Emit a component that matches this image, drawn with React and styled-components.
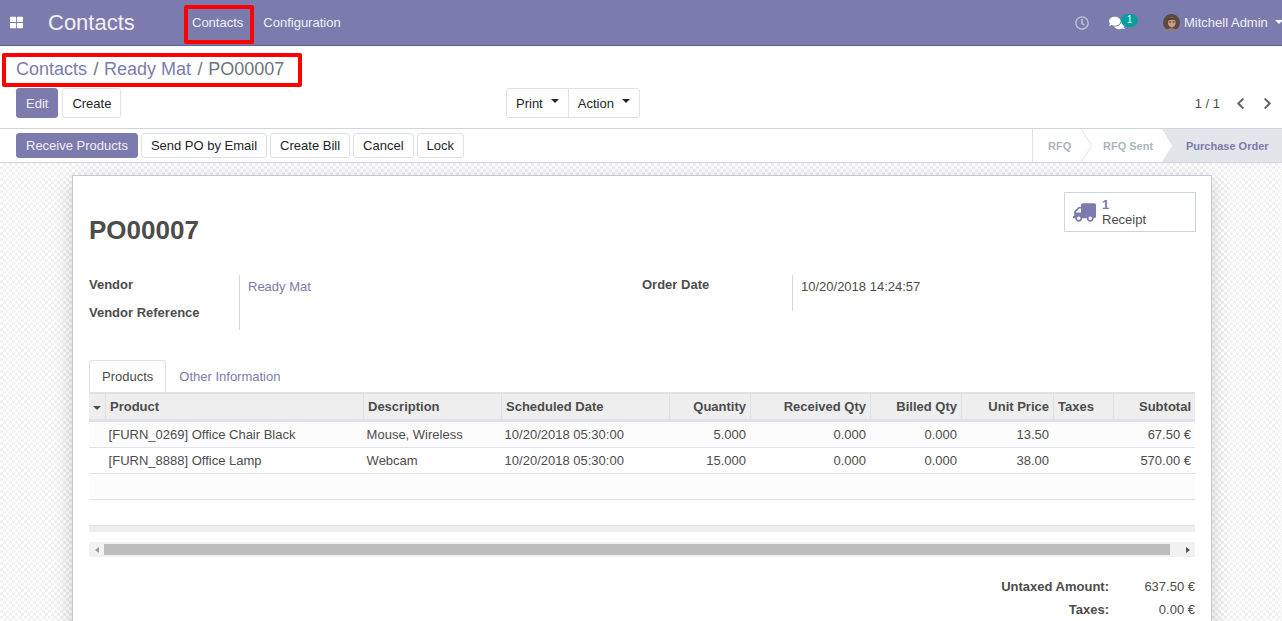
import React from 'react';
import styled, { createGlobalStyle } from 'styled-components';
import { FaThLarge, FaRegClock, FaComments, FaChevronLeft, FaChevronRight, FaTruck } from 'react-icons/fa';

const purple = '#7c7bad';

const columns = [
  { key: 'handle', width: 17 },
  { key: 'product', label: 'Product', width: 258 },
  { key: 'description', label: 'Description', width: 138 },
  { key: 'date', label: 'Scheduled Date', width: 168 },
  { key: 'qty', label: 'Quantity', width: 81, right: true },
  { key: 'received', label: 'Received Qty', width: 120, right: true },
  { key: 'billed', label: 'Billed Qty', width: 91, right: true },
  { key: 'price', label: 'Unit Price', width: 92, right: true },
  { key: 'taxes', label: 'Taxes', width: 60 },
  { key: 'subtotal', label: 'Subtotal', width: 81, right: true },
];

const rows = [
  {
    product: '[FURN_0269] Office Chair Black',
    description: 'Mouse, Wireless',
    date: '10/20/2018 05:30:00',
    qty: '5.000',
    received: '0.000',
    billed: '0.000',
    price: '13.50',
    subtotal: '67.50 €',
  },
  {
    product: '[FURN_8888] Office Lamp',
    description: 'Webcam',
    date: '10/20/2018 05:30:00',
    qty: '15.000',
    received: '0.000',
    billed: '0.000',
    price: '38.00',
    subtotal: '570.00 €',
  },
  {},
  {},
];

const Avatar = () => (
  <AvatarSvg viewBox='0 0 16 16'>
    <circle cx='8' cy='8' r='8' fill='#5d4a3f' />
    <ellipse cx='8.3' cy='8' rx='3.6' ry='4.6' fill='#c99f84' />
    <path d='M4 6.5C4.5 3 11.5 2.5 12.5 6.5L11 5.5H6Z' fill='#3c2c25' />
    <path d='M5.5 7.5h2.2M9 7.5h2.2' stroke='#3f322c' strokeWidth='0.9' />
    <path d='M2.5 16C3.5 12.5 12.5 12.5 13.5 16Z' fill='#8d8078' />
  </AvatarSvg>
);

const App = () => (
  <Page>
    <GlobalStyle />
    <Navbar>
      <AppsButton>
        <FaThLarge size={13} />
      </AppsButton>
      <Brand>Contacts</Brand>
      <NavMenu>
        <NavItem>
          Contacts
          <NavHighlight />
        </NavItem>
        <NavItem>Configuration</NavItem>
      </NavMenu>
      <NavRight>
        <ClockIcon>
          <FaRegClock size={14} />
        </ClockIcon>
        <Messages>
          <FaComments size={16} />
          <Badge>1</Badge>
        </Messages>
        <UserMenu>
          <Avatar />
          Mitchell Admin
          <Caret $light />
        </UserMenu>
      </NavRight>
    </Navbar>

    <ControlPanel>
      <Breadcrumb>
        <CrumbLink>Contacts</CrumbLink>
        <CrumbSep>/</CrumbSep>
        <CrumbLink>Ready Mat</CrumbLink>
        <CrumbSep>/</CrumbSep>
        <CrumbCurrent>PO00007</CrumbCurrent>
        <BreadcrumbHighlight />
      </Breadcrumb>
      <PanelRow>
        <PanelLeft>
          <Button $primary $tall>Edit</Button>
          <Button $tall>Create</Button>
        </PanelLeft>
        <ActionGroup>
          <GroupButton>
            Print
            <Caret />
          </GroupButton>
          <GroupButton>
            Action
            <Caret />
          </GroupButton>
        </ActionGroup>
        <Pager>
          <PagerValue>1 / 1</PagerValue>
          <PagerArrows>
            <FaChevronLeft size={13} />
            <FaChevronRight size={13} />
          </PagerArrows>
        </Pager>
      </PanelRow>
    </ControlPanel>

    <StatusHeader>
      <HeaderButtons>
        <Button $primary>Receive Products</Button>
        <Button>Send PO by Email</Button>
        <Button>Create Bill</Button>
        <Button>Cancel</Button>
        <Button>Lock</Button>
      </HeaderButtons>
      <StatusBar>
        <StatusStep $width={59}>
          RFQ
          <StepChevron viewBox='0 0 11 33' preserveAspectRatio='none'>
            <path d='M0 0L11 16.5L0 33' />
          </StepChevron>
        </StatusStep>
        <StatusStep $width={70} $pad={11}>RFQ Sent</StatusStep>
        <ActiveStep>Purchase Order</ActiveStep>
      </StatusBar>
    </StatusHeader>

    <FormView>
      <Sheet>
        <ButtonBox>
          <StatButton>
            <TruckIcon size={23} />
            <StatText>
              <StatValue>1</StatValue>
              Receipt
            </StatText>
          </StatButton>
        </ButtonBox>
        <Title>PO00007</Title>
        <FormGrid>
          <FormGroup>
            <Labels>
              <Label>Vendor</Label>
              <Label>Vendor Reference</Label>
            </Labels>
            <Values $tall>
              <VendorLink>Ready Mat</VendorLink>
            </Values>
          </FormGroup>
          <FormGroup>
            <Labels>
              <Label>Order Date</Label>
            </Labels>
            <Values>10/20/2018 14:24:57</Values>
          </FormGroup>
        </FormGrid>

        <Tabs>
          <Tab $active>Products</Tab>
          <Tab>Other Information</Tab>
        </Tabs>

        <Table>
          <colgroup>
            {columns.map((col) => (
              <col key={col.key} width={col.width} />
            ))}
          </colgroup>
          <thead>
            <tr>
              {columns.map((col) => (
                <HeadCell key={col.key} $right={col.right}>
                  {col.key === 'handle' ? <Caret $table /> : col.label}
                </HeadCell>
              ))}
            </tr>
          </thead>
          <tbody>
            {rows.map((row, i) => (
              <BodyRow key={i} $striped={i % 2 === 0}>
                {columns.map((col) => (
                  <BodyCell key={col.key} $right={col.right}>
                    {row[col.key]}
                  </BodyCell>
                ))}
              </BodyRow>
            ))}
          </tbody>
        </Table>
        <TableFooter />

        <ScrollBar>
          <ScrollArrow $left />
          <ScrollThumb />
          <ScrollArrow />
        </ScrollBar>

        <Totals>
          <TotalLabel>Untaxed Amount:</TotalLabel>
          <TotalValue>637.50 €</TotalValue>
          <TotalLabel>Taxes:</TotalLabel>
          <TotalValue>0.00 €</TotalValue>
        </Totals>
      </Sheet>
    </FormView>
  </Page>
);

export default App;

const GlobalStyle = createGlobalStyle`
  html, body {
    margin: 0;
    height: 100%;
    overflow: hidden;
    background: #fff;
  }
  body {
    font-family: "Liberation Sans", Arial, sans-serif;
    font-size: 13px;
    color: #4c4c4c;
  }
`;

const Page = styled.div`
  height: 621px;
  display: flex;
  flex-direction: column;
  overflow: hidden;
`;

const Navbar = styled.header`
  flex: 0 0 46px;
  box-sizing: border-box;
  display: flex;
  align-items: center;
  background: ${purple};
  border-bottom: 1px solid #5f5e97;
  color: #fff;
`;

const AppsButton = styled.div`
  width: 48px;
  padding-left: 10px;
  box-sizing: border-box;
  display: flex;
  align-items: center;
`;

const Brand = styled.div`
  width: 134px;
  font-size: 22px;
  line-height: 1;
  color: #f0f0f6;
`;

const NavMenu = styled.nav`
  display: flex;
  align-items: center;
`;

const NavItem = styled.div`
  position: relative;
  padding: 0 10px;
  color: #f0f0f6;
  line-height: 18px;
`;

const NavHighlight = styled.span`
  position: absolute;
  left: 2px;
  top: -9px;
  width: 70px;
  height: 39px;
  box-sizing: border-box;
  border: 4px solid #f00;
  border-radius: 2px;
`;

const NavRight = styled.div`
  margin-left: auto;
  display: flex;
  align-items: center;
  height: 100%;
`;

const ClockIcon = styled.div`
  display: flex;
  color: #c5c5d9;
  margin-right: 20px;
`;

const Messages = styled.div`
  position: relative;
  display: flex;
  width: 16px;
  margin-right: 38px;
  color: #fff;
`;

const Badge = styled.span`
  position: absolute;
  left: 12px;
  top: -1px;
  width: 17px;
  height: 13px;
  border-radius: 7px;
  background: #00a09d;
  color: #fff;
  font-size: 10px;
  line-height: 12px;
  text-align: center;
`;

const UserMenu = styled.div`
  display: flex;
  align-items: center;
  width: 119px;
  white-space: nowrap;
  color: #f0f0f6;
`;

const AvatarSvg = styled.svg`
  width: 17px;
  height: 17px;
  margin-right: 4px;
  flex: none;
`;

const Caret = styled.span`
  display: inline-block;
  flex: none;
  margin-left: ${(p) => (p.$table ? 0 : p.$light ? '7px' : '8px')};
  border-top: 4px solid ${(p) => (p.$light ? '#fff' : p.$table ? '#4c4c4c' : '#212529')};
  border-left: 4px solid transparent;
  border-right: 4px solid transparent;
  vertical-align: ${(p) => (p.$table ? '1px' : '3px')};
  position: relative;
  top: ${(p) => (p.$light ? '-1px' : '0')};
`;

const ControlPanel = styled.section`
  flex: 0 0 83px;
  box-sizing: border-box;
  padding: 0 8px 0 16px;
  border-bottom: 1px solid #ced4da;
  background: #fff;
`;

const Breadcrumb = styled.div`
  position: relative;
  display: flex;
  align-items: center;
  height: 42px;
  padding-top: 5px;
  box-sizing: border-box;
  font-size: 18px;
`;

const BreadcrumbHighlight = styled.span`
  position: absolute;
  left: -14px;
  top: 7px;
  width: 300px;
  height: 34px;
  box-sizing: border-box;
  border: 4px solid #f00;
  border-radius: 2px;
`;

const CrumbLink = styled.span`
  color: ${purple};
`;

const CrumbSep = styled.span`
  color: #6c757d;
  margin: 0 5.5px 0 6.5px;
`;

const CrumbCurrent = styled.span`
  color: #6c757d;
`;

const PanelRow = styled.div`
  display: flex;
  align-items: flex-start;
`;

const PanelLeft = styled.div`
  flex: 0 0 490px;
  display: flex;
  gap: 4px;
`;

const Button = styled.button`
  height: ${(p) => (p.$tall ? '30px' : '25px')};
  box-sizing: border-box;
  padding: 0 9px;
  white-space: nowrap;
  border: 1px solid ${(p) => (p.$primary ? purple : '#dee2e6')};
  border-radius: 3px;
  background: ${(p) => (p.$primary ? purple : '#fff')};
  color: ${(p) => (p.$primary ? '#f0f0f6' : '#212529')};
  font: 13px "Liberation Sans", Arial, sans-serif;
`;

const ActionGroup = styled.div`
  display: flex;
  width: 134px;
  height: 30px;
  box-sizing: border-box;
  border: 1px solid #dee2e6;
  border-radius: 3px;
`;

const GroupButton = styled.div`
  display: flex;
  align-items: center;
  padding: 0 9px;
  color: #212529;
  & + & {
    flex: 1;
    border-left: 1px solid #dee2e6;
  }
  ${Caret} {
    top: -2px;
  }
`;

const Pager = styled.div`
  margin-left: auto;
  display: flex;
  align-items: center;
  height: 30px;
`;

const PagerValue = styled.span`
  color: #4c4c4c;
  margin-right: 14px;
`;

const PagerArrows = styled.div`
  display: flex;
  gap: 14px;
  color: #666;
`;

const StatusHeader = styled.section`
  flex: 0 0 34px;
  box-sizing: border-box;
  display: flex;
  align-items: center;
  justify-content: space-between;
  padding-left: 16px;
  border-bottom: 1px solid #ced4da;
  background: #fff;
`;

const HeaderButtons = styled.div`
  display: flex;
  gap: 3px;
`;

const StatusBar = styled.div`
  flex: none;
  height: 33px;
  display: flex;
  border-left: 1px solid #dee2e6;
  font-size: 11px;
  font-weight: 700;
  white-space: nowrap;
`;

const StatusStep = styled.div`
  position: relative;
  box-sizing: border-box;
  width: ${(p) => p.$width}px;
  padding: 1px 0 0 ${(p) => p.$pad || 15}px;
  line-height: 32px;
  color: #adb5bd;
`;

const StepChevron = styled.svg`
  position: absolute;
  right: 0;
  top: 0;
  width: 11px;
  height: 33px;
  fill: none;
  stroke: #dee2e6;
`;

const ActiveStep = styled.div`
  flex: 0 0 120px;
  box-sizing: border-box;
  padding: 1px 0 0 24px;
  line-height: 32px;
  background: #e2e5e9;
  color: ${purple};
  clip-path: polygon(0 0, 100% 0, 100% 100%, 0 100%, 10px 50%);
`;

const FormView = styled.main`
  flex: 1;
  min-height: 0;
  padding-top: 13px;
  background-color: #fff;
  background-image: repeating-conic-gradient(#f1f1f1 0 25%, #fff 0 50%);
  background-size: 6px 6px;
`;

const Sheet = styled.div`
  position: relative;
  box-sizing: border-box;
  width: 1140px;
  min-height: 700px;
  margin-left: 72px;
  margin-top: -1px;
  padding: 16px 16px 0;
  background: #fff;
  border: 1px solid #c8c8d3;
  box-shadow: 0 5px 20px -1px rgba(0, 0, 0, 0.2);
`;

const ButtonBox = styled.div`
  display: flex;
  justify-content: flex-end;
  margin-right: -1px;
  height: 0;
`;

const StatButton = styled.div`
  display: flex;
  flex: none;
  align-items: center;
  gap: 6px;
  width: 132px;
  height: 40px;
  box-sizing: border-box;
  padding-left: 8px;
  border: 1px solid #ced4da;
  color: #4c4c4c;
`;

const TruckIcon = styled(FaTruck)`
  color: ${purple};
  transform: scaleX(-1);
`;

const StatText = styled.div`
  line-height: 15px;
`;

const StatValue = styled.div`
  color: ${purple};
  font-weight: 700;
`;

const Title = styled.h1`
  margin: 18px 0 0;
  font-size: 26px;
  line-height: 40px;
  font-weight: 700;
  color: #4c4c4c;
`;

const FormGrid = styled.div`
  display: grid;
  grid-template-columns: 553px 553px;
  margin-top: 25px;
  align-items: start;
`;

const FormGroup = styled.div`
  display: flex;
`;

const Labels = styled.div`
  flex: 0 0 150px;
  padding-top: 1px;
`;

const Label = styled.div`
  height: 28px;
  line-height: 17px;
  font-weight: 700;
`;

const Values = styled.div`
  flex: 1;
  box-sizing: border-box;
  height: ${(p) => (p.$tall ? '55px' : '36px')};
  padding: 4px 0 0 8px;
  border-left: 1px solid #d8d8d8;
  line-height: 15px;
`;

const VendorLink = styled.span`
  color: ${purple};
`;

const Tabs = styled.div`
  display: flex;
  height: 32px;
  margin-top: 28px;
  box-sizing: border-box;
`;

const Tab = styled.div`
  box-sizing: border-box;
  height: 32px;
  padding: 8px 12px 0;
  line-height: 16px;
  border: 1px solid ${(p) => (p.$active ? '#dee2e6' : 'transparent')};
  border-bottom: 0;
  border-radius: 3px 3px 0 0;
  color: ${(p) => (p.$active ? '#4c4c4c' : purple)};
`;

const Table = styled.table`
  width: 1106px;
  table-layout: fixed;
  border-collapse: separate;
  border-spacing: 0;
`;

const HeadCell = styled.th`
  box-sizing: border-box;
  height: 30px;
  padding: 0 4px;
  overflow: hidden;
  white-space: nowrap;
  background: #eee;
  border-top: 2px solid #dee2e6;
  border-bottom: 3px solid #dee2e6;
  border-right: 1px solid #dee2e6;
  text-align: ${(p) => (p.$right ? 'right' : 'left')};
  font-weight: 700;
  line-height: 14px;
  &:last-child {
    border-right: 0;
  }
`;

const BodyRow = styled.tr`
  background: ${(p) => (p.$striped ? '#fcfcfc' : '#fff')};
`;

const BodyCell = styled.td`
  box-sizing: border-box;
  height: 26px;
  padding: 0 5px 0 2.6px;
  overflow: hidden;
  white-space: nowrap;
  border-bottom: 1px solid #dee2e6;
  text-align: ${(p) => (p.$right ? 'right' : 'left')};
  line-height: 15px;
  &:last-child {
    padding-right: 4px;
  }
`;

const TableFooter = styled.div`
  height: 6px;
  background: #eee;
`;

const ScrollBar = styled.div`
  display: flex;
  align-items: center;
  height: 15px;
  margin-top: 10px;
  background: #f1f1f1;
`;

const ScrollThumb = styled.div`
  flex: 1;
  height: 11px;
  background: #bdbdbd;
`;

const ScrollArrow = styled.span`
  flex: 0 0 ${(p) => (p.$left ? '15px' : '25px')};
  box-sizing: border-box;
  display: flex;
  justify-content: ${(p) => (p.$left ? 'center' : 'flex-end')};
  padding-right: ${(p) => (p.$left ? 0 : '5px')};
  &::before {
    content: '';
    border-top: 3.5px solid transparent;
    border-bottom: 3.5px solid transparent;
    ${(p) => (p.$left ? 'border-right: 4px solid #999;' : 'border-left: 4px solid #505050;')}
  }
`;

const Totals = styled.div`
  display: grid;
  grid-template-columns: 1fr 86px;
  margin-top: 18px;
  line-height: 23px;
  text-align: right;
`;

const TotalLabel = styled.div`
  font-weight: 700;
`;

const TotalValue = styled.div``;
